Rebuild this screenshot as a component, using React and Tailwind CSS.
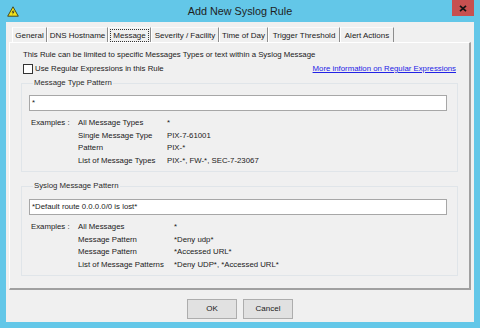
const TABS = [
  { label: 'General', w: 'w-[35px]' },
  { label: 'DNS Hostname', w: 'w-[61px]' },
  { label: 'Message', w: 'w-[43px]', active: true },
  { label: 'Severity / Facility', w: 'w-[68px]' },
  { label: 'Time of Day', w: 'w-[49px]' },
  { label: 'Trigger Threshold', w: 'w-[72px]' },
  { label: 'Alert Actions', w: 'w-[54px]' },
]

const TYPE_EXAMPLES = [
  ['All Message Types', '*'],
  ['Single Message Type', 'PIX-7-61001'],
  ['Pattern', 'PIX-*'],
  ['List of Message Types', 'PIX-*, FW-*, SEC-7-23067'],
]

const TEXT_EXAMPLES = [
  ['All Messages', '*'],
  ['Message Pattern', '*Deny udp*'],
  ['Message Pattern', '*Accessed URL*'],
  ['List of Message Patterns', '*Deny UDP*, *Accessed URL*'],
]

function WarnIcon() {
  return (
    <svg width="12" height="11" viewBox="0 0 12 11">
      <path d="M6 0.8 L11.3 10.2 L0.7 10.2 Z" fill="#f2e21b" stroke="#3a3a1a" strokeWidth="0.9" strokeLinejoin="round" />
      <path d="M6.6 3.6 L4.6 6.6 L6.1 6.6 L5.2 8.9 L7.6 5.6 L6.1 5.6 Z" fill="#2a2a2a" />
    </svg>
  )
}

function Examples({ rows, mid }) {
  return (
    <div className="mt-[6px] pl-[2px]">
      {rows.map(([name, value], i) => (
        <div key={i} className="flex h-[12.5px] items-center leading-[12.5px]">
          <span className="w-[47px] shrink-0">{i === 0 ? 'Examples :' : ''}</span>
          <span className={`${mid} shrink-0`}>{name}</span>
          <span>{value}</span>
        </div>
      ))}
    </div>
  )
}

function Group({ title, value, rows, mid, inputGap }) {
  return (
    <fieldset className="border border-[#e0e5e9] pl-[7px] pr-[10px] pb-[4px]">
      <legend className="ml-[4px] px-[1px] leading-[10px] text-[#2a2a2a]">{title}</legend>
      <div className={`${inputGap} h-[16px] border border-[#a7a7a7] bg-white pl-[2px] leading-[14px]`}>
        {value}
      </div>
      <Examples rows={rows} mid={mid} />
    </fieldset>
  )
}

export default function App() {
  return (
    <div className="flex h-[328px] w-[480px] flex-col bg-[#63c7e8] font-['Liberation_Sans',Arial,sans-serif] text-[7.8px] text-[#1a1a1a]">
      {/* title bar */}
      <div className="flex h-[22px] shrink-0">
        <div className="flex w-[28px] items-center pl-[7px]">
          <WarnIcon />
        </div>
        <div className="flex-1 pt-[3px] text-center text-[10.8px] leading-[16px] text-[#1e1e1e]">
          Add New Syslog Rule
        </div>
        <div className="w-[28px]">
          <div className="flex h-[16px] w-[22px] items-center justify-center bg-[#c75050]">
            <svg width="8" height="7" viewBox="0 0 8 7">
              <path d="M1 0.8 L7 6.2 M7 0.8 L1 6.2" stroke="#141414" strokeWidth="1.7" />
            </svg>
          </div>
        </div>
      </div>

      {/* client area */}
      <div className="mx-[6px] flex h-[300px] flex-col bg-[#f0f0f0]">
        <div className="ml-[6px] mt-[5px] flex h-[15px] text-[8px]">
          {TABS.map((t) => (
            <div
              key={t.label}
              className={`${t.w} flex items-center justify-center border-l border-t border-r border-l-white border-t-[#fafafa] border-r-[#8d8d8d] leading-[11px]`}
            >
              {t.active ? (
                <span className="border border-dotted border-[#333] px-[2px]">{t.label}</span>
              ) : (
                t.label
              )}
            </div>
          ))}
        </div>

        <div className="ml-[3px] flex h-[248px] w-[462px] flex-col border-l border-t border-l-white border-t-white border-r-2 border-b-2 border-r-[#a0a0a0] border-b-[#a0a0a0] px-[11px]">
          <div className="mt-[6px] h-[12px] pl-[2px] leading-[12px]">
            This Rule can be limited to specific Messages Types or text within a Syslog Message
          </div>
          <div className="mt-[2px] flex h-[12px] items-center pl-[2px] pr-[2px]">
            <span className="h-[10px] w-[10px] border border-[#333] bg-white" />
            <span className="ml-[2px] leading-[12px]">Use Regular Expressions in this Rule</span>
            <span className="ml-auto text-[#2222e6] underline leading-[12px]">
              More information on Regular Expressions
            </span>
          </div>

          <div className="mt-[3px]">
            <Group title="Message Type Pattern" value="*" rows={TYPE_EXAMPLES} mid="w-[89px]" inputGap="mt-[7px]" />
          </div>
          <div className="mt-[9px]">
            <Group
              title="Syslog Message Pattern"
              value="*Default route 0.0.0.0/0 is lost*"
              rows={TEXT_EXAMPLES}
              mid="w-[96px]"
              inputGap="mt-[8px]"
            />
          </div>
        </div>

        <div className="mt-[9px] flex justify-center gap-[6px] text-[8px]">
          <button className="h-[20px] w-[50px] border border-[#adadad] bg-[#e1e1e1]">OK</button>
          <button className="h-[20px] w-[50px] border border-[#adadad] bg-[#e1e1e1]">Cancel</button>
        </div>
      </div>
    </div>
  )
}
